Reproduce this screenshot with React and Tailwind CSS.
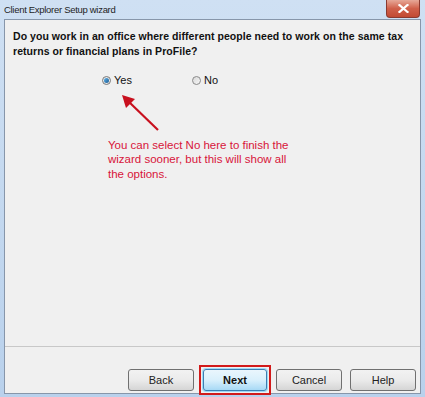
export default function App() {
  const btn =
    "h-[22px] w-[66px] rounded-[3px] border border-[#707070] bg-gradient-to-b from-[#f2f2f2] via-[#ebebeb] to-[#d5d5d5] text-[11px] text-[#222] flex items-center justify-center";
  return (
    <div
      className="w-[425px] h-[397px] flex flex-col bg-gradient-to-b from-[#cfe0f3] to-[#b9d1ec] overflow-hidden"
      style={{ fontFamily: '"Liberation Sans", Arial, sans-serif' }}
    >
      {/* title bar */}
      <div className="h-[19px] relative flex items-center pl-[4px]">
        <span className="text-[9.5px] tracking-[-0.3px] text-[#1e1e1e] leading-none pt-[1px]">Client Explorer Setup wizard</span>
        <div className="absolute right-[5px] top-0 w-[34px] h-[18px] rounded-b-[4px] border border-t-0 border-[#8a3a30] bg-gradient-to-b from-[#e6a898] via-[#d0604a] to-[#c24a33] flex items-center justify-center">
          <svg width="11" height="9" viewBox="0 0 11 9">
            <path d="M1.5 1 L9.5 8 M9.5 1 L1.5 8" stroke="#fff" strokeWidth="2.2" strokeLinecap="square" />
          </svg>
        </div>
      </div>
      {/* content */}
      <div className="flex-1 mx-[4px] mb-[3px] border border-[#8796aa] bg-[#f0f0f0] flex flex-col">
        <div className="flex-1 relative">
          <div className="pt-[9px] pl-[8px] pr-[2px] text-[10.5px] tracking-[0.05px] font-bold text-[#111] leading-[15px]">
            Do you work in an office where different people need to work on the same tax returns or financial plans in ProFile?
          </div>
          <div className="flex items-center mt-[13px] pl-[97px] text-[11px] text-[#111]">
            <div className="flex items-center gap-[3px] w-[90px]">
              <div className="w-[9px] h-[9px] rounded-full border border-[#7a7a7a] bg-[#e8e8e8] flex items-center justify-center">
                <div className="w-[5px] h-[5px] rounded-full bg-gradient-to-br from-[#5fb2e8] to-[#1c5d94]"></div>
              </div>
              <span>Yes</span>
            </div>
            <div className="flex items-center gap-[3px]">
              <div className="w-[9px] h-[9px] rounded-full border border-[#8a8a8a] bg-gradient-to-br from-[#d8d8d8] to-[#f8f8f8]"></div>
              <span>No</span>
            </div>
          </div>
          <svg className="absolute left-[114px] top-[72px]" width="46" height="46" viewBox="0 0 46 46">
            <path d="M39 38 L9 9" stroke="#c8101e" strokeWidth="2.2" />
            <path d="M3 3 L16 7 L7 16 Z" fill="#c8101e" />
          </svg>
          <div className="mt-[49px] ml-[103px] w-[195px] text-[11.5px] leading-[14.5px] text-[#d8143a]">
            You can select No here to finish the wizard sooner, but this will show all the options.
          </div>
        </div>
        <div className="h-[47px] border-t border-[#c8c8c8] flex items-start justify-end gap-[8px] pr-[4px] pt-[22px]">
          <div className={btn}>Back</div>
          <div className="p-[2px] border-2 border-[#d21a1a] -mt-[4px] -mx-[3px]">
            <div className="h-[22px] w-[64px] rounded-[3px] border border-[#3c7fb1] bg-gradient-to-b from-[#eaf6fd] via-[#d9f0fc] to-[#a7d9f5] text-[11px] font-bold text-[#111] flex items-center justify-center shadow-[0_0_0_1px_#9fd8f5]">
              Next
            </div>
          </div>
          <div className={btn}>Cancel</div>
          <div className={btn}>Help</div>
        </div>
      </div>
    </div>
  );
}
